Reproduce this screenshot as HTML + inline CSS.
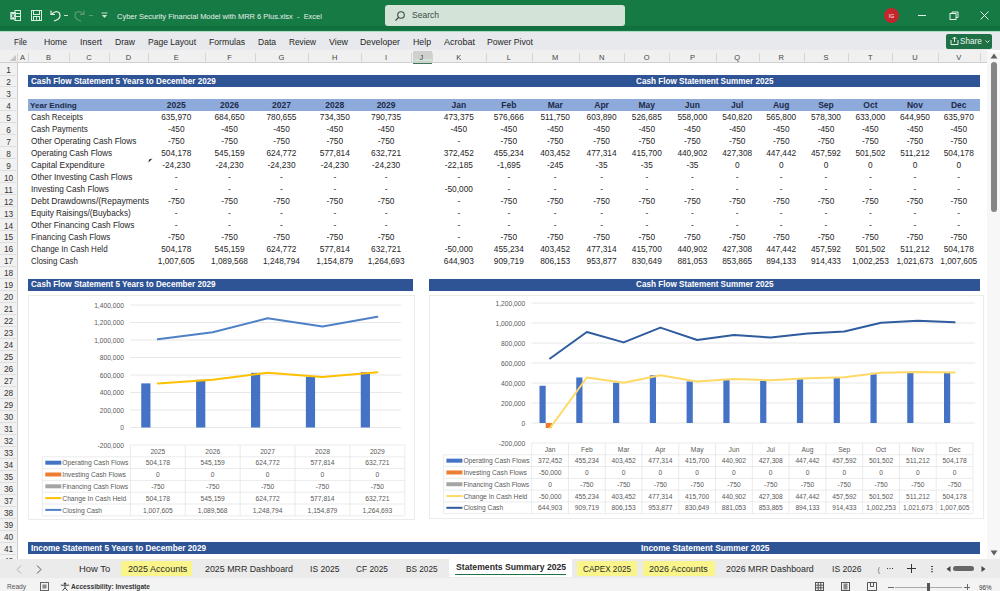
<!DOCTYPE html><html><head><meta charset="utf-8"><style>
*{margin:0;padding:0;box-sizing:border-box}
html,body{width:1000px;height:591px;overflow:hidden;background:#fff;font-family:"Liberation Sans",sans-serif;color:#222}
.a{position:absolute}
.t{position:absolute;white-space:pre;line-height:12px}
.d{position:absolute;white-space:pre;line-height:12px;margin-top:0.4px;font-size:8.3px;color:#262626;text-align:center}
.ch{position:absolute;white-space:pre;font-size:6.7px;color:#595959;line-height:12px;margin-top:0.5px}
</style></head><body>
<div class="a" style="left:0;top:0;width:1000px;height:31px;background:#167a45"></div>
<div class="a" style="left:0;top:26px;width:1000px;height:4px;background:#11703d"></div>
<div class="t" style="left:117px;top:10.8px;font-size:7.8px;color:#e8f1ea;transform:scaleX(0.9593);transform-origin:0 0;">Cyber Security Financial Model with MRR 6 Plus.xlsx  -  Excel</div>
<div class="a" style="left:385px;top:5px;width:240px;height:21px;background:#d3e3d8;border-radius:3px"></div>
<svg class="a" style="left:394px;top:10px" width="12" height="12" viewBox="0 0 12 12"><circle cx="7" cy="5" r="3.3" fill="none" stroke="#3a4a40" stroke-width="1.1"/><line x1="4.6" y1="7.4" x2="1.5" y2="10.5" stroke="#3a4a40" stroke-width="1.2"/></svg>
<div class="t" style="left:412px;top:9px;font-size:8.5px;color:#404a44;transform:scaleX(1.0025);transform-origin:0 0;">Search</div>
<div class="a" style="left:884px;top:8px;width:15px;height:15px;border-radius:50%;background:#c4262e"></div>
<div class="t" style="left:884px;top:9.5px;width:15px;text-align:center;font-size:5px;color:#fff">IG</div>
<div class="a" style="left:918px;top:15px;width:8px;height:1px;background:#e8f1ea"></div>
<svg class="a" style="left:949px;top:11px" width="10" height="9" viewBox="0 0 10 9"><rect x="1" y="2.5" width="6" height="6" fill="none" stroke="#e8f1ea" stroke-width="1"/><path d="M3 2.5 V1 H9 V6.5 H7" fill="none" stroke="#e8f1ea" stroke-width="1"/></svg>
<svg class="a" style="left:980px;top:11px" width="9" height="9" viewBox="0 0 9 9"><path d="M0.5 0.5 L8.5 8.5 M8.5 0.5 L0.5 8.5" stroke="#e8f1ea" stroke-width="1"/></svg>
<svg class="a" style="left:10px;top:10px" width="11" height="11" viewBox="0 0 11 11"><rect x="5" y="0.5" width="5.5" height="10" fill="none" stroke="#d8efdf" stroke-width="1"/><path d="M5 3.5 H10.5 M5 6.5 H10.5" stroke="#d8efdf" stroke-width="1"/><rect x="0.3" y="2" width="5.5" height="7.5" fill="#d8efdf"/><path d="M1.8 3.8 L4.3 7.7 M4.3 3.8 L1.8 7.7" stroke="#1b6f40" stroke-width="0.9"/></svg>
<svg class="a" style="left:31px;top:10px" width="11" height="11" viewBox="0 0 11 11"><rect x="0.5" y="0.5" width="10" height="10" fill="none" stroke="#d8efdf" stroke-width="1"/><rect x="2.5" y="0.5" width="6" height="4" fill="none" stroke="#d8efdf" stroke-width="1"/><rect x="2.5" y="6.5" width="6" height="4" fill="none" stroke="#d8efdf" stroke-width="1"/><path d="M5.5 6.5 V10.5" stroke="#d8efdf" stroke-width="0.8"/></svg>
<svg class="a" style="left:50px;top:9px" width="12" height="13" viewBox="0 0 12 13"><path d="M2 5 C5 1.5 10 2 10 6.5 C10 9.5 7.5 11 4 12" fill="none" stroke="#e8f1ea" stroke-width="1.2"/><path d="M1 1.5 V5.5 H5" fill="none" stroke="#e8f1ea" stroke-width="1.2"/></svg>
<div class="a" style="left:64px;top:15px;width:4px;height:1px;background:#cfe0d4"></div>
<svg class="a" style="left:73px;top:9px" width="12" height="13" viewBox="0 0 12 13"><path d="M10 5 C7 1.5 2 2 2 6.5 C2 9.5 4.5 11 8 12" fill="none" stroke="#5f9a76" stroke-width="1.2"/><path d="M11 1.5 V5.5 H7" fill="none" stroke="#5f9a76" stroke-width="1.2"/></svg>
<div class="a" style="left:89px;top:15px;width:4px;height:1px;background:#5f9a76"></div>
<svg class="a" style="left:101px;top:12px" width="7" height="7" viewBox="0 0 7 7"><line x1="0.5" y1="1" x2="6.5" y2="1" stroke="#cfe0d4"/><path d="M0.8 3 H6.2 L3.5 6 Z" fill="#cfe0d4"/></svg>
<div class="a" style="left:0;top:31px;width:1000px;height:19px;background:#e8e9ec"></div>
<div class="a" style="left:0;top:30.5px;width:1000px;height:1px;background:#a9dcbf"></div>
<div class="t" style="left:14px;top:35.5px;font-size:8.5px;color:#262626;transform:scaleX(0.9492);transform-origin:0 0;">File</div>
<div class="t" style="left:44px;top:35.5px;font-size:8.5px;color:#262626;transform:scaleX(1.0144);transform-origin:0 0;">Home</div>
<div class="t" style="left:80px;top:35.5px;font-size:8.5px;color:#262626;transform:scaleX(1.0349);transform-origin:0 0;">Insert</div>
<div class="t" style="left:115px;top:35.5px;font-size:8.5px;color:#262626;transform:scaleX(1.0083);transform-origin:0 0;">Draw</div>
<div class="t" style="left:148px;top:35.5px;font-size:8.5px;color:#262626;transform:scaleX(1.0056);transform-origin:0 0;">Page Layout</div>
<div class="t" style="left:209px;top:35.5px;font-size:8.5px;color:#262626;transform:scaleX(1.0163);transform-origin:0 0;">Formulas</div>
<div class="t" style="left:258px;top:35.5px;font-size:8.5px;color:#262626;transform:scaleX(1.0025);transform-origin:0 0;">Data</div>
<div class="t" style="left:289px;top:35.5px;font-size:8.5px;color:#262626;transform:scaleX(0.9688);transform-origin:0 0;">Review</div>
<div class="t" style="left:329px;top:35.5px;font-size:8.5px;color:#262626;transform:scaleX(1.0399);transform-origin:0 0;">View</div>
<div class="t" style="left:360px;top:35.5px;font-size:8.5px;color:#262626;transform:scaleX(1.0324);transform-origin:0 0;">Developer</div>
<div class="t" style="left:413px;top:35.5px;font-size:8.5px;color:#262626;transform:scaleX(1.0297);transform-origin:0 0;">Help</div>
<div class="t" style="left:444px;top:35.5px;font-size:8.5px;color:#262626;transform:scaleX(1.0582);transform-origin:0 0;">Acrobat</div>
<div class="t" style="left:487px;top:35.5px;font-size:8.5px;color:#262626;transform:scaleX(1.0143);transform-origin:0 0;">Power Pivot</div>
<div class="a" style="left:946px;top:33.5px;width:46px;height:15px;background:#1e7145;border-radius:2px"></div>
<svg class="a" style="left:950px;top:36px" width="9" height="9" viewBox="0 0 9 9"><path d="M1 4 V8.5 H8 V4" fill="none" stroke="#e8f1ea"/><path d="M4.5 6 V1 M2.5 3 L4.5 1 L6.5 3" fill="none" stroke="#e8f1ea"/></svg>
<div class="t" style="left:960px;top:35px;font-size:8.5px;color:#f2f7f3;transform:scaleX(0.9611);transform-origin:0 0;">Share</div>
<svg class="a" style="left:985px;top:40px" width="5" height="3" viewBox="0 0 5 3"><path d="M0.5 0.5 L2.5 2.5 L4.5 0.5" fill="none" stroke="#e8f1ea"/></svg>
<div class="a" style="left:0;top:50px;width:987px;height:13px;background:#f0f0f0;border-bottom:1px solid #cfcfcf"></div>
<svg class="a" style="left:8.5px;top:54.5px" width="7" height="6.5" viewBox="0 0 7 6.5"><path d="M7 0 V6.5 H0 Z" fill="#c4c4c4"/></svg>
<div class="a" style="left:28px;top:53px;width:1px;height:10px;background:#d6d6d6"></div>
<div class="t" style="left:17px;top:51.5px;width:11px;text-align:center;font-size:7.5px;color:#444;line-height:12px">A</div>
<div class="a" style="left:69px;top:53px;width:1px;height:10px;background:#d6d6d6"></div>
<div class="t" style="left:28px;top:51.5px;width:41px;text-align:center;font-size:7.5px;color:#444;line-height:12px">B</div>
<div class="a" style="left:109px;top:53px;width:1px;height:10px;background:#d6d6d6"></div>
<div class="t" style="left:69px;top:51.5px;width:40px;text-align:center;font-size:7.5px;color:#444;line-height:12px">C</div>
<div class="a" style="left:148px;top:53px;width:1px;height:10px;background:#d6d6d6"></div>
<div class="t" style="left:109px;top:51.5px;width:39px;text-align:center;font-size:7.5px;color:#444;line-height:12px">D</div>
<div class="a" style="left:204.5px;top:53px;width:1px;height:10px;background:#d6d6d6"></div>
<div class="t" style="left:148px;top:51.5px;width:56.5px;text-align:center;font-size:7.5px;color:#444;line-height:12px">E</div>
<div class="a" style="left:254.5px;top:53px;width:1px;height:10px;background:#d6d6d6"></div>
<div class="t" style="left:204.5px;top:51.5px;width:50px;text-align:center;font-size:7.5px;color:#444;line-height:12px">F</div>
<div class="a" style="left:308.4px;top:53px;width:1px;height:10px;background:#d6d6d6"></div>
<div class="t" style="left:254.5px;top:51.5px;width:53.9px;text-align:center;font-size:7.5px;color:#444;line-height:12px">G</div>
<div class="a" style="left:361.2px;top:53px;width:1px;height:10px;background:#d6d6d6"></div>
<div class="t" style="left:308.4px;top:51.5px;width:52.8px;text-align:center;font-size:7.5px;color:#444;line-height:12px">H</div>
<div class="a" style="left:411px;top:53px;width:1px;height:10px;background:#d6d6d6"></div>
<div class="t" style="left:361.2px;top:51.5px;width:49.8px;text-align:center;font-size:7.5px;color:#444;line-height:12px">I</div>
<div class="a" style="left:412.5px;top:51px;width:19.1px;height:12.5px;background:#d0d0d0;border-bottom:1.5px solid #3f7a55"></div>
<div class="a" style="left:415px;top:58.5px;width:16.6px;height:2.5px;background:#cfe6d5"></div>
<div class="a" style="left:431.6px;top:53px;width:1px;height:10px;background:#d6d6d6"></div>
<div class="t" style="left:411px;top:51.5px;width:20.6px;text-align:center;font-size:7.5px;color:#444;line-height:12px">J</div>
<div class="a" style="left:486px;top:53px;width:1px;height:10px;background:#d6d6d6"></div>
<div class="t" style="left:431.6px;top:51.5px;width:54.4px;text-align:center;font-size:7.5px;color:#444;line-height:12px">K</div>
<div class="a" style="left:531.6px;top:53px;width:1px;height:10px;background:#d6d6d6"></div>
<div class="t" style="left:486px;top:51.5px;width:45.6px;text-align:center;font-size:7.5px;color:#444;line-height:12px">L</div>
<div class="a" style="left:578.8px;top:53px;width:1px;height:10px;background:#d6d6d6"></div>
<div class="t" style="left:531.6px;top:51.5px;width:47.2px;text-align:center;font-size:7.5px;color:#444;line-height:12px">M</div>
<div class="a" style="left:624.4px;top:53px;width:1px;height:10px;background:#d6d6d6"></div>
<div class="t" style="left:578.8px;top:51.5px;width:45.6px;text-align:center;font-size:7.5px;color:#444;line-height:12px">N</div>
<div class="a" style="left:669.2px;top:53px;width:1px;height:10px;background:#d6d6d6"></div>
<div class="t" style="left:624.4px;top:51.5px;width:44.8px;text-align:center;font-size:7.5px;color:#444;line-height:12px">O</div>
<div class="a" style="left:715.6px;top:53px;width:1px;height:10px;background:#d6d6d6"></div>
<div class="t" style="left:669.2px;top:51.5px;width:46.4px;text-align:center;font-size:7.5px;color:#444;line-height:12px">P</div>
<div class="a" style="left:758.8px;top:53px;width:1px;height:10px;background:#d6d6d6"></div>
<div class="t" style="left:715.6px;top:51.5px;width:43.2px;text-align:center;font-size:7.5px;color:#444;line-height:12px">Q</div>
<div class="a" style="left:803.6px;top:53px;width:1px;height:10px;background:#d6d6d6"></div>
<div class="t" style="left:758.8px;top:51.5px;width:44.8px;text-align:center;font-size:7.5px;color:#444;line-height:12px">R</div>
<div class="a" style="left:848.4px;top:53px;width:1px;height:10px;background:#d6d6d6"></div>
<div class="t" style="left:803.6px;top:51.5px;width:44.8px;text-align:center;font-size:7.5px;color:#444;line-height:12px">S</div>
<div class="a" style="left:892.4px;top:53px;width:1px;height:10px;background:#d6d6d6"></div>
<div class="t" style="left:848.4px;top:51.5px;width:44px;text-align:center;font-size:7.5px;color:#444;line-height:12px">T</div>
<div class="a" style="left:937.5px;top:53px;width:1px;height:10px;background:#d6d6d6"></div>
<div class="t" style="left:892.4px;top:51.5px;width:45.1px;text-align:center;font-size:7.5px;color:#444;line-height:12px">U</div>
<div class="a" style="left:980px;top:53px;width:1px;height:10px;background:#d6d6d6"></div>
<div class="t" style="left:937.5px;top:51.5px;width:42.5px;text-align:center;font-size:7.5px;color:#444;line-height:12px">V</div>
<div class="a" style="left:987px;top:53px;width:1px;height:10px;background:#d6d6d6"></div>
<div class="a" style="left:17px;top:53px;width:1px;height:10px;background:#d6d6d6"></div>
<div class="a" style="left:0;top:63px;width:17.6px;height:496px;background:#f1f1f1;border-right:1px solid #cdcdcd"></div>
<div class="t" style="left:0;top:63.82px;width:17px;text-align:center;font-size:8.3px;color:#333">1</div>
<div class="a" style="left:0;top:74.5px;width:16px;height:1px;background:#dedede"></div>
<div class="t" style="left:0;top:75.8px;width:17px;text-align:center;font-size:8.3px;color:#333">2</div>
<div class="a" style="left:0;top:86.47px;width:16px;height:1px;background:#dedede"></div>
<div class="t" style="left:0;top:87.77px;width:17px;text-align:center;font-size:8.3px;color:#333">3</div>
<div class="a" style="left:0;top:98.45px;width:16px;height:1px;background:#dedede"></div>
<div class="t" style="left:0;top:99.75px;width:17px;text-align:center;font-size:8.3px;color:#333">4</div>
<div class="a" style="left:0;top:110.42px;width:16px;height:1px;background:#dedede"></div>
<div class="t" style="left:0;top:111.72px;width:17px;text-align:center;font-size:8.3px;color:#333">5</div>
<div class="a" style="left:0;top:122.4px;width:16px;height:1px;background:#dedede"></div>
<div class="t" style="left:0;top:123.7px;width:17px;text-align:center;font-size:8.3px;color:#333">6</div>
<div class="a" style="left:0;top:134.38px;width:16px;height:1px;background:#dedede"></div>
<div class="t" style="left:0;top:135.68px;width:17px;text-align:center;font-size:8.3px;color:#333">7</div>
<div class="a" style="left:0;top:146.35px;width:16px;height:1px;background:#dedede"></div>
<div class="t" style="left:0;top:147.65px;width:17px;text-align:center;font-size:8.3px;color:#333">8</div>
<div class="a" style="left:0;top:158.32px;width:16px;height:1px;background:#dedede"></div>
<div class="t" style="left:0;top:159.62px;width:17px;text-align:center;font-size:8.3px;color:#333">9</div>
<div class="a" style="left:0;top:170.3px;width:16px;height:1px;background:#dedede"></div>
<div class="t" style="left:0;top:171.6px;width:17px;text-align:center;font-size:8.3px;color:#333">10</div>
<div class="a" style="left:0;top:182.28px;width:16px;height:1px;background:#dedede"></div>
<div class="t" style="left:0;top:183.57px;width:17px;text-align:center;font-size:8.3px;color:#333">11</div>
<div class="a" style="left:0;top:194.25px;width:16px;height:1px;background:#dedede"></div>
<div class="t" style="left:0;top:195.55px;width:17px;text-align:center;font-size:8.3px;color:#333">12</div>
<div class="a" style="left:0;top:206.22px;width:16px;height:1px;background:#dedede"></div>
<div class="t" style="left:0;top:207.52px;width:17px;text-align:center;font-size:8.3px;color:#333">13</div>
<div class="a" style="left:0;top:218.2px;width:16px;height:1px;background:#dedede"></div>
<div class="t" style="left:0;top:219.5px;width:17px;text-align:center;font-size:8.3px;color:#333">14</div>
<div class="a" style="left:0;top:230.17px;width:16px;height:1px;background:#dedede"></div>
<div class="t" style="left:0;top:231.48px;width:17px;text-align:center;font-size:8.3px;color:#333">15</div>
<div class="a" style="left:0;top:242.15px;width:16px;height:1px;background:#dedede"></div>
<div class="t" style="left:0;top:243.45px;width:17px;text-align:center;font-size:8.3px;color:#333">16</div>
<div class="a" style="left:0;top:254.12px;width:16px;height:1px;background:#dedede"></div>
<div class="t" style="left:0;top:255.43px;width:17px;text-align:center;font-size:8.3px;color:#333">17</div>
<div class="a" style="left:0;top:266.1px;width:16px;height:1px;background:#dedede"></div>
<div class="t" style="left:0;top:267.4px;width:17px;text-align:center;font-size:8.3px;color:#333">18</div>
<div class="a" style="left:0;top:278.07px;width:16px;height:1px;background:#dedede"></div>
<div class="t" style="left:0;top:279.38px;width:17px;text-align:center;font-size:8.3px;color:#333">19</div>
<div class="a" style="left:0;top:290.05px;width:16px;height:1px;background:#dedede"></div>
<div class="t" style="left:0;top:291.35px;width:17px;text-align:center;font-size:8.3px;color:#333">20</div>
<div class="a" style="left:0;top:302.03px;width:16px;height:1px;background:#dedede"></div>
<div class="t" style="left:0;top:303.32px;width:17px;text-align:center;font-size:8.3px;color:#333">21</div>
<div class="a" style="left:0;top:314px;width:16px;height:1px;background:#dedede"></div>
<div class="t" style="left:0;top:315.3px;width:17px;text-align:center;font-size:8.3px;color:#333">22</div>
<div class="a" style="left:0;top:325.98px;width:16px;height:1px;background:#dedede"></div>
<div class="t" style="left:0;top:327.28px;width:17px;text-align:center;font-size:8.3px;color:#333">23</div>
<div class="a" style="left:0;top:337.95px;width:16px;height:1px;background:#dedede"></div>
<div class="t" style="left:0;top:339.25px;width:17px;text-align:center;font-size:8.3px;color:#333">24</div>
<div class="a" style="left:0;top:349.93px;width:16px;height:1px;background:#dedede"></div>
<div class="t" style="left:0;top:351.23px;width:17px;text-align:center;font-size:8.3px;color:#333">25</div>
<div class="a" style="left:0;top:361.9px;width:16px;height:1px;background:#dedede"></div>
<div class="t" style="left:0;top:363.2px;width:17px;text-align:center;font-size:8.3px;color:#333">26</div>
<div class="a" style="left:0;top:373.88px;width:16px;height:1px;background:#dedede"></div>
<div class="t" style="left:0;top:375.18px;width:17px;text-align:center;font-size:8.3px;color:#333">27</div>
<div class="a" style="left:0;top:385.85px;width:16px;height:1px;background:#dedede"></div>
<div class="t" style="left:0;top:387.15px;width:17px;text-align:center;font-size:8.3px;color:#333">28</div>
<div class="a" style="left:0;top:397.83px;width:16px;height:1px;background:#dedede"></div>
<div class="t" style="left:0;top:399.12px;width:17px;text-align:center;font-size:8.3px;color:#333">29</div>
<div class="a" style="left:0;top:409.8px;width:16px;height:1px;background:#dedede"></div>
<div class="t" style="left:0;top:411.1px;width:17px;text-align:center;font-size:8.3px;color:#333">30</div>
<div class="a" style="left:0;top:421.78px;width:16px;height:1px;background:#dedede"></div>
<div class="t" style="left:0;top:423.07px;width:17px;text-align:center;font-size:8.3px;color:#333">31</div>
<div class="a" style="left:0;top:433.75px;width:16px;height:1px;background:#dedede"></div>
<div class="t" style="left:0;top:435.05px;width:17px;text-align:center;font-size:8.3px;color:#333">32</div>
<div class="a" style="left:0;top:445.73px;width:16px;height:1px;background:#dedede"></div>
<div class="t" style="left:0;top:447.03px;width:17px;text-align:center;font-size:8.3px;color:#333">33</div>
<div class="a" style="left:0;top:457.7px;width:16px;height:1px;background:#dedede"></div>
<div class="t" style="left:0;top:459px;width:17px;text-align:center;font-size:8.3px;color:#333">34</div>
<div class="a" style="left:0;top:469.68px;width:16px;height:1px;background:#dedede"></div>
<div class="t" style="left:0;top:470.98px;width:17px;text-align:center;font-size:8.3px;color:#333">35</div>
<div class="a" style="left:0;top:481.65px;width:16px;height:1px;background:#dedede"></div>
<div class="t" style="left:0;top:482.95px;width:17px;text-align:center;font-size:8.3px;color:#333">36</div>
<div class="a" style="left:0;top:493.62px;width:16px;height:1px;background:#dedede"></div>
<div class="t" style="left:0;top:494.93px;width:17px;text-align:center;font-size:8.3px;color:#333">37</div>
<div class="a" style="left:0;top:505.6px;width:16px;height:1px;background:#dedede"></div>
<div class="t" style="left:0;top:506.9px;width:17px;text-align:center;font-size:8.3px;color:#333">38</div>
<div class="a" style="left:0;top:517.58px;width:16px;height:1px;background:#dedede"></div>
<div class="t" style="left:0;top:518.87px;width:17px;text-align:center;font-size:8.3px;color:#333">39</div>
<div class="a" style="left:0;top:529.55px;width:16px;height:1px;background:#dedede"></div>
<div class="t" style="left:0;top:530.85px;width:17px;text-align:center;font-size:8.3px;color:#333">40</div>
<div class="a" style="left:0;top:541.52px;width:16px;height:1px;background:#dedede"></div>
<div class="t" style="left:0;top:542.82px;width:17px;text-align:center;font-size:8.3px;color:#333">41</div>
<div class="a" style="left:0;top:553.5px;width:16px;height:1px;background:#dedede"></div>
<div class="t" style="left:0;top:554.8px;width:17px;text-align:center;font-size:8.3px;color:#333">42</div>
<div class="a" style="left:0;top:565.48px;width:16px;height:1px;background:#dedede"></div>
<div class="a" style="left:987px;top:52px;width:13px;height:507px;background:#f7f7f7"></div>
<svg class="a" style="left:990px;top:53px" width="8" height="6" viewBox="0 0 8 6"><path d="M4 0.5 L7.5 5.5 H0.5 Z" fill="#606060"/></svg>
<div class="a" style="left:991px;top:62px;width:6px;height:150px;background:#858585;border-radius:3px"></div>
<svg class="a" style="left:990px;top:550px" width="8" height="6" viewBox="0 0 8 6"><path d="M4 5.5 L7.5 0.5 H0.5 Z" fill="#606060"/></svg>
<div class="a" style="left:28px;top:75px;width:952px;height:11.97px;background:#2f5496"></div>
<div class="t" style="left:30.5px;top:75.6px;font-size:8.2px;font-weight:bold;color:#fff;transform:scaleX(0.9933);transform-origin:0 0;">Cash Flow Statement 5 Years to December 2029</div>
<div class="t" style="left:636.2px;top:75.6px;font-size:8.2px;font-weight:bold;color:#fff;transform:scaleX(0.9947);transform-origin:0 0;">Cash Flow Statement Summer 2025</div>
<div class="a" style="left:28px;top:98.95px;width:952px;height:11.97px;background:#8eaadb"></div>
<div class="t" style="left:30px;top:100.15px;font-size:8.1px;font-weight:bold;color:#1c2b4a">Year Ending</div>
<div class="d" style="left:148px;top:98.95px;width:56.5px;font-weight:bold;color:#1c2b4a;font-size:8.5px;margin-top:0.4px">2025</div>
<div class="d" style="left:204.5px;top:98.95px;width:50px;font-weight:bold;color:#1c2b4a;font-size:8.5px;margin-top:0.4px">2026</div>
<div class="d" style="left:254.5px;top:98.95px;width:53.9px;font-weight:bold;color:#1c2b4a;font-size:8.5px;margin-top:0.4px">2027</div>
<div class="d" style="left:308.4px;top:98.95px;width:52.8px;font-weight:bold;color:#1c2b4a;font-size:8.5px;margin-top:0.4px">2028</div>
<div class="d" style="left:361.2px;top:98.95px;width:49.8px;font-weight:bold;color:#1c2b4a;font-size:8.5px;margin-top:0.4px">2029</div>
<div class="d" style="left:431.6px;top:98.95px;width:54.4px;font-weight:bold;color:#1c2b4a;font-size:8.5px;margin-top:0.4px">Jan</div>
<div class="d" style="left:486px;top:98.95px;width:45.6px;font-weight:bold;color:#1c2b4a;font-size:8.5px;margin-top:0.4px">Feb</div>
<div class="d" style="left:531.6px;top:98.95px;width:47.2px;font-weight:bold;color:#1c2b4a;font-size:8.5px;margin-top:0.4px">Mar</div>
<div class="d" style="left:578.8px;top:98.95px;width:45.6px;font-weight:bold;color:#1c2b4a;font-size:8.5px;margin-top:0.4px">Apr</div>
<div class="d" style="left:624.4px;top:98.95px;width:44.8px;font-weight:bold;color:#1c2b4a;font-size:8.5px;margin-top:0.4px">May</div>
<div class="d" style="left:669.2px;top:98.95px;width:46.4px;font-weight:bold;color:#1c2b4a;font-size:8.5px;margin-top:0.4px">Jun</div>
<div class="d" style="left:715.6px;top:98.95px;width:43.2px;font-weight:bold;color:#1c2b4a;font-size:8.5px;margin-top:0.4px">Jul</div>
<div class="d" style="left:758.8px;top:98.95px;width:44.8px;font-weight:bold;color:#1c2b4a;font-size:8.5px;margin-top:0.4px">Aug</div>
<div class="d" style="left:803.6px;top:98.95px;width:44.8px;font-weight:bold;color:#1c2b4a;font-size:8.5px;margin-top:0.4px">Sep</div>
<div class="d" style="left:848.4px;top:98.95px;width:44px;font-weight:bold;color:#1c2b4a;font-size:8.5px;margin-top:0.4px">Oct</div>
<div class="d" style="left:892.4px;top:98.95px;width:45.1px;font-weight:bold;color:#1c2b4a;font-size:8.5px;margin-top:0.4px">Nov</div>
<div class="d" style="left:937.5px;top:98.95px;width:42.5px;font-weight:bold;color:#1c2b4a;font-size:8.5px;margin-top:0.4px">Dec</div>
<div class="t" style="left:30.5px;top:112.12px;font-size:8.2px;color:#262626;transform:scaleX(0.9752);transform-origin:0 0;">Cash Receipts</div>
<div class="d" style="left:148px;top:110.92px;width:56.5px">635,970</div>
<div class="d" style="left:204.5px;top:110.92px;width:50px">684,650</div>
<div class="d" style="left:254.5px;top:110.92px;width:53.9px">780,655</div>
<div class="d" style="left:308.4px;top:110.92px;width:52.8px">734,350</div>
<div class="d" style="left:361.2px;top:110.92px;width:49.8px">790,735</div>
<div class="d" style="left:431.6px;top:110.92px;width:54.4px">473,375</div>
<div class="d" style="left:486px;top:110.92px;width:45.6px">576,666</div>
<div class="d" style="left:531.6px;top:110.92px;width:47.2px">511,750</div>
<div class="d" style="left:578.8px;top:110.92px;width:45.6px">603,890</div>
<div class="d" style="left:624.4px;top:110.92px;width:44.8px">526,685</div>
<div class="d" style="left:669.2px;top:110.92px;width:46.4px">558,000</div>
<div class="d" style="left:715.6px;top:110.92px;width:43.2px">540,820</div>
<div class="d" style="left:758.8px;top:110.92px;width:44.8px">565,800</div>
<div class="d" style="left:803.6px;top:110.92px;width:44.8px">578,300</div>
<div class="d" style="left:848.4px;top:110.92px;width:44px">633,000</div>
<div class="d" style="left:892.4px;top:110.92px;width:45.1px">644,950</div>
<div class="d" style="left:937.5px;top:110.92px;width:42.5px">635,970</div>
<div class="t" style="left:30.5px;top:124.1px;font-size:8.2px;color:#262626;transform:scaleX(0.9813);transform-origin:0 0;">Cash Payments</div>
<div class="d" style="left:148px;top:122.9px;width:56.5px">-450</div>
<div class="d" style="left:204.5px;top:122.9px;width:50px">-450</div>
<div class="d" style="left:254.5px;top:122.9px;width:53.9px">-450</div>
<div class="d" style="left:308.4px;top:122.9px;width:52.8px">-450</div>
<div class="d" style="left:361.2px;top:122.9px;width:49.8px">-450</div>
<div class="d" style="left:431.6px;top:122.9px;width:54.4px">-450</div>
<div class="d" style="left:486px;top:122.9px;width:45.6px">-450</div>
<div class="d" style="left:531.6px;top:122.9px;width:47.2px">-450</div>
<div class="d" style="left:578.8px;top:122.9px;width:45.6px">-450</div>
<div class="d" style="left:624.4px;top:122.9px;width:44.8px">-450</div>
<div class="d" style="left:669.2px;top:122.9px;width:46.4px">-450</div>
<div class="d" style="left:715.6px;top:122.9px;width:43.2px">-450</div>
<div class="d" style="left:758.8px;top:122.9px;width:44.8px">-450</div>
<div class="d" style="left:803.6px;top:122.9px;width:44.8px">-450</div>
<div class="d" style="left:848.4px;top:122.9px;width:44px">-450</div>
<div class="d" style="left:892.4px;top:122.9px;width:45.1px">-450</div>
<div class="d" style="left:937.5px;top:122.9px;width:42.5px">-450</div>
<div class="t" style="left:30.5px;top:136.07px;font-size:8.2px;color:#262626;transform:scaleX(1.0153);transform-origin:0 0;">Other Operating Cash Flows</div>
<div class="d" style="left:148px;top:134.88px;width:56.5px">-750</div>
<div class="d" style="left:204.5px;top:134.88px;width:50px">-750</div>
<div class="d" style="left:254.5px;top:134.88px;width:53.9px">-750</div>
<div class="d" style="left:308.4px;top:134.88px;width:52.8px">-750</div>
<div class="d" style="left:361.2px;top:134.88px;width:49.8px">-750</div>
<div class="d" style="left:431.6px;top:134.88px;width:54.4px">-</div>
<div class="d" style="left:486px;top:134.88px;width:45.6px">-750</div>
<div class="d" style="left:531.6px;top:134.88px;width:47.2px">-750</div>
<div class="d" style="left:578.8px;top:134.88px;width:45.6px">-750</div>
<div class="d" style="left:624.4px;top:134.88px;width:44.8px">-750</div>
<div class="d" style="left:669.2px;top:134.88px;width:46.4px">-750</div>
<div class="d" style="left:715.6px;top:134.88px;width:43.2px">-750</div>
<div class="d" style="left:758.8px;top:134.88px;width:44.8px">-750</div>
<div class="d" style="left:803.6px;top:134.88px;width:44.8px">-750</div>
<div class="d" style="left:848.4px;top:134.88px;width:44px">-750</div>
<div class="d" style="left:892.4px;top:134.88px;width:45.1px">-750</div>
<div class="d" style="left:937.5px;top:134.88px;width:42.5px">-750</div>
<div class="t" style="left:30.5px;top:148.05px;font-size:8.2px;color:#262626;transform:scaleX(1.0009);transform-origin:0 0;">Operating Cash Flows</div>
<div class="d" style="left:148px;top:146.85px;width:56.5px">504,178</div>
<div class="d" style="left:204.5px;top:146.85px;width:50px">545,159</div>
<div class="d" style="left:254.5px;top:146.85px;width:53.9px">624,772</div>
<div class="d" style="left:308.4px;top:146.85px;width:52.8px">577,814</div>
<div class="d" style="left:361.2px;top:146.85px;width:49.8px">632,721</div>
<div class="d" style="left:431.6px;top:146.85px;width:54.4px">372,452</div>
<div class="d" style="left:486px;top:146.85px;width:45.6px">455,234</div>
<div class="d" style="left:531.6px;top:146.85px;width:47.2px">403,452</div>
<div class="d" style="left:578.8px;top:146.85px;width:45.6px">477,314</div>
<div class="d" style="left:624.4px;top:146.85px;width:44.8px">415,700</div>
<div class="d" style="left:669.2px;top:146.85px;width:46.4px">440,902</div>
<div class="d" style="left:715.6px;top:146.85px;width:43.2px">427,308</div>
<div class="d" style="left:758.8px;top:146.85px;width:44.8px">447,442</div>
<div class="d" style="left:803.6px;top:146.85px;width:44.8px">457,592</div>
<div class="d" style="left:848.4px;top:146.85px;width:44px">501,502</div>
<div class="d" style="left:892.4px;top:146.85px;width:45.1px">511,212</div>
<div class="d" style="left:937.5px;top:146.85px;width:42.5px">504,178</div>
<div class="t" style="left:30.5px;top:160.02px;font-size:8.2px;color:#262626;transform:scaleX(1.0298);transform-origin:0 0;">Capital Expenditure</div>
<div class="d" style="left:148px;top:158.82px;width:56.5px">-24,230</div>
<div class="d" style="left:204.5px;top:158.82px;width:50px">-24,230</div>
<div class="d" style="left:254.5px;top:158.82px;width:53.9px">-24,230</div>
<div class="d" style="left:308.4px;top:158.82px;width:52.8px">-24,230</div>
<div class="d" style="left:361.2px;top:158.82px;width:49.8px">-24,230</div>
<div class="d" style="left:431.6px;top:158.82px;width:54.4px">-22,185</div>
<div class="d" style="left:486px;top:158.82px;width:45.6px">-1,695</div>
<div class="d" style="left:531.6px;top:158.82px;width:47.2px">-245</div>
<div class="d" style="left:578.8px;top:158.82px;width:45.6px">-35</div>
<div class="d" style="left:624.4px;top:158.82px;width:44.8px">-35</div>
<div class="d" style="left:669.2px;top:158.82px;width:46.4px">-35</div>
<div class="d" style="left:715.6px;top:158.82px;width:43.2px">0</div>
<div class="d" style="left:758.8px;top:158.82px;width:44.8px">0</div>
<div class="d" style="left:803.6px;top:158.82px;width:44.8px">0</div>
<div class="d" style="left:848.4px;top:158.82px;width:44px">0</div>
<div class="d" style="left:892.4px;top:158.82px;width:45.1px">0</div>
<div class="d" style="left:937.5px;top:158.82px;width:42.5px">0</div>
<div class="t" style="left:30.5px;top:172px;font-size:8.2px;color:#262626;transform:scaleX(1.0078);transform-origin:0 0;">Other Investing Cash Flows</div>
<div class="d" style="left:148px;top:170.8px;width:56.5px">-</div>
<div class="d" style="left:204.5px;top:170.8px;width:50px">-</div>
<div class="d" style="left:254.5px;top:170.8px;width:53.9px">-</div>
<div class="d" style="left:308.4px;top:170.8px;width:52.8px">-</div>
<div class="d" style="left:361.2px;top:170.8px;width:49.8px">-</div>
<div class="d" style="left:431.6px;top:170.8px;width:54.4px">-</div>
<div class="d" style="left:486px;top:170.8px;width:45.6px">-</div>
<div class="d" style="left:531.6px;top:170.8px;width:47.2px">-</div>
<div class="d" style="left:578.8px;top:170.8px;width:45.6px">-</div>
<div class="d" style="left:624.4px;top:170.8px;width:44.8px">-</div>
<div class="d" style="left:669.2px;top:170.8px;width:46.4px">-</div>
<div class="d" style="left:715.6px;top:170.8px;width:43.2px">-</div>
<div class="d" style="left:758.8px;top:170.8px;width:44.8px">-</div>
<div class="d" style="left:803.6px;top:170.8px;width:44.8px">-</div>
<div class="d" style="left:848.4px;top:170.8px;width:44px">-</div>
<div class="d" style="left:892.4px;top:170.8px;width:45.1px">-</div>
<div class="d" style="left:937.5px;top:170.8px;width:42.5px">-</div>
<div class="t" style="left:30.5px;top:183.97px;font-size:8.2px;color:#262626;transform:scaleX(0.9996);transform-origin:0 0;">Investing Cash Flows</div>
<div class="d" style="left:148px;top:182.77px;width:56.5px">-</div>
<div class="d" style="left:204.5px;top:182.77px;width:50px">-</div>
<div class="d" style="left:254.5px;top:182.77px;width:53.9px">-</div>
<div class="d" style="left:308.4px;top:182.77px;width:52.8px">-</div>
<div class="d" style="left:361.2px;top:182.77px;width:49.8px">-</div>
<div class="d" style="left:431.6px;top:182.77px;width:54.4px">-50,000</div>
<div class="d" style="left:486px;top:182.77px;width:45.6px">-</div>
<div class="d" style="left:531.6px;top:182.77px;width:47.2px">-</div>
<div class="d" style="left:578.8px;top:182.77px;width:45.6px">-</div>
<div class="d" style="left:624.4px;top:182.77px;width:44.8px">-</div>
<div class="d" style="left:669.2px;top:182.77px;width:46.4px">-</div>
<div class="d" style="left:715.6px;top:182.77px;width:43.2px">-</div>
<div class="d" style="left:758.8px;top:182.77px;width:44.8px">-</div>
<div class="d" style="left:803.6px;top:182.77px;width:44.8px">-</div>
<div class="d" style="left:848.4px;top:182.77px;width:44px">-</div>
<div class="d" style="left:892.4px;top:182.77px;width:45.1px">-</div>
<div class="d" style="left:937.5px;top:182.77px;width:42.5px">-</div>
<div class="t" style="left:30.5px;top:195.95px;font-size:8.2px;color:#262626;transform:scaleX(1.0407);transform-origin:0 0;">Debt Drawdowns/(Repayments</div>
<div class="d" style="left:148px;top:194.75px;width:56.5px">-750</div>
<div class="d" style="left:204.5px;top:194.75px;width:50px">-750</div>
<div class="d" style="left:254.5px;top:194.75px;width:53.9px">-750</div>
<div class="d" style="left:308.4px;top:194.75px;width:52.8px">-750</div>
<div class="d" style="left:361.2px;top:194.75px;width:49.8px">-750</div>
<div class="d" style="left:431.6px;top:194.75px;width:54.4px">-</div>
<div class="d" style="left:486px;top:194.75px;width:45.6px">-750</div>
<div class="d" style="left:531.6px;top:194.75px;width:47.2px">-750</div>
<div class="d" style="left:578.8px;top:194.75px;width:45.6px">-750</div>
<div class="d" style="left:624.4px;top:194.75px;width:44.8px">-750</div>
<div class="d" style="left:669.2px;top:194.75px;width:46.4px">-750</div>
<div class="d" style="left:715.6px;top:194.75px;width:43.2px">-750</div>
<div class="d" style="left:758.8px;top:194.75px;width:44.8px">-750</div>
<div class="d" style="left:803.6px;top:194.75px;width:44.8px">-750</div>
<div class="d" style="left:848.4px;top:194.75px;width:44px">-750</div>
<div class="d" style="left:892.4px;top:194.75px;width:45.1px">-750</div>
<div class="d" style="left:937.5px;top:194.75px;width:42.5px">-750</div>
<div class="t" style="left:30.5px;top:207.92px;font-size:8.2px;color:#262626;transform:scaleX(1.0009);transform-origin:0 0;">Equity Raisings/(Buybacks)</div>
<div class="d" style="left:148px;top:206.72px;width:56.5px">-</div>
<div class="d" style="left:204.5px;top:206.72px;width:50px">-</div>
<div class="d" style="left:254.5px;top:206.72px;width:53.9px">-</div>
<div class="d" style="left:308.4px;top:206.72px;width:52.8px">-</div>
<div class="d" style="left:361.2px;top:206.72px;width:49.8px">-</div>
<div class="d" style="left:431.6px;top:206.72px;width:54.4px">-</div>
<div class="d" style="left:486px;top:206.72px;width:45.6px">-</div>
<div class="d" style="left:531.6px;top:206.72px;width:47.2px">-</div>
<div class="d" style="left:578.8px;top:206.72px;width:45.6px">-</div>
<div class="d" style="left:624.4px;top:206.72px;width:44.8px">-</div>
<div class="d" style="left:669.2px;top:206.72px;width:46.4px">-</div>
<div class="d" style="left:715.6px;top:206.72px;width:43.2px">-</div>
<div class="d" style="left:758.8px;top:206.72px;width:44.8px">-</div>
<div class="d" style="left:803.6px;top:206.72px;width:44.8px">-</div>
<div class="d" style="left:848.4px;top:206.72px;width:44px">-</div>
<div class="d" style="left:892.4px;top:206.72px;width:45.1px">-</div>
<div class="d" style="left:937.5px;top:206.72px;width:42.5px">-</div>
<div class="t" style="left:30.5px;top:219.9px;font-size:8.2px;color:#262626;transform:scaleX(1.0005);transform-origin:0 0;">Other Financing Cash Flows</div>
<div class="d" style="left:148px;top:218.7px;width:56.5px">-</div>
<div class="d" style="left:204.5px;top:218.7px;width:50px">-</div>
<div class="d" style="left:254.5px;top:218.7px;width:53.9px">-</div>
<div class="d" style="left:308.4px;top:218.7px;width:52.8px">-</div>
<div class="d" style="left:361.2px;top:218.7px;width:49.8px">-</div>
<div class="d" style="left:431.6px;top:218.7px;width:54.4px">-</div>
<div class="d" style="left:486px;top:218.7px;width:45.6px">-</div>
<div class="d" style="left:531.6px;top:218.7px;width:47.2px">-</div>
<div class="d" style="left:578.8px;top:218.7px;width:45.6px">-</div>
<div class="d" style="left:624.4px;top:218.7px;width:44.8px">-</div>
<div class="d" style="left:669.2px;top:218.7px;width:46.4px">-</div>
<div class="d" style="left:715.6px;top:218.7px;width:43.2px">-</div>
<div class="d" style="left:758.8px;top:218.7px;width:44.8px">-</div>
<div class="d" style="left:803.6px;top:218.7px;width:44.8px">-</div>
<div class="d" style="left:848.4px;top:218.7px;width:44px">-</div>
<div class="d" style="left:892.4px;top:218.7px;width:45.1px">-</div>
<div class="d" style="left:937.5px;top:218.7px;width:42.5px">-</div>
<div class="t" style="left:30.5px;top:231.88px;font-size:8.2px;color:#262626;transform:scaleX(0.9843);transform-origin:0 0;">Financing Cash Flows</div>
<div class="d" style="left:148px;top:230.68px;width:56.5px">-750</div>
<div class="d" style="left:204.5px;top:230.68px;width:50px">-750</div>
<div class="d" style="left:254.5px;top:230.68px;width:53.9px">-750</div>
<div class="d" style="left:308.4px;top:230.68px;width:52.8px">-750</div>
<div class="d" style="left:361.2px;top:230.68px;width:49.8px">-750</div>
<div class="d" style="left:431.6px;top:230.68px;width:54.4px">-</div>
<div class="d" style="left:486px;top:230.68px;width:45.6px">-750</div>
<div class="d" style="left:531.6px;top:230.68px;width:47.2px">-750</div>
<div class="d" style="left:578.8px;top:230.68px;width:45.6px">-750</div>
<div class="d" style="left:624.4px;top:230.68px;width:44.8px">-750</div>
<div class="d" style="left:669.2px;top:230.68px;width:46.4px">-750</div>
<div class="d" style="left:715.6px;top:230.68px;width:43.2px">-750</div>
<div class="d" style="left:758.8px;top:230.68px;width:44.8px">-750</div>
<div class="d" style="left:803.6px;top:230.68px;width:44.8px">-750</div>
<div class="d" style="left:848.4px;top:230.68px;width:44px">-750</div>
<div class="d" style="left:892.4px;top:230.68px;width:45.1px">-750</div>
<div class="d" style="left:937.5px;top:230.68px;width:42.5px">-750</div>
<div class="t" style="left:30.5px;top:243.85px;font-size:8.2px;color:#262626;transform:scaleX(0.9783);transform-origin:0 0;">Change In Cash Held</div>
<div class="d" style="left:148px;top:242.65px;width:56.5px">504,178</div>
<div class="d" style="left:204.5px;top:242.65px;width:50px">545,159</div>
<div class="d" style="left:254.5px;top:242.65px;width:53.9px">624,772</div>
<div class="d" style="left:308.4px;top:242.65px;width:52.8px">577,814</div>
<div class="d" style="left:361.2px;top:242.65px;width:49.8px">632,721</div>
<div class="d" style="left:431.6px;top:242.65px;width:54.4px">-50,000</div>
<div class="d" style="left:486px;top:242.65px;width:45.6px">455,234</div>
<div class="d" style="left:531.6px;top:242.65px;width:47.2px">403,452</div>
<div class="d" style="left:578.8px;top:242.65px;width:45.6px">477,314</div>
<div class="d" style="left:624.4px;top:242.65px;width:44.8px">415,700</div>
<div class="d" style="left:669.2px;top:242.65px;width:46.4px">440,902</div>
<div class="d" style="left:715.6px;top:242.65px;width:43.2px">427,308</div>
<div class="d" style="left:758.8px;top:242.65px;width:44.8px">447,442</div>
<div class="d" style="left:803.6px;top:242.65px;width:44.8px">457,592</div>
<div class="d" style="left:848.4px;top:242.65px;width:44px">501,502</div>
<div class="d" style="left:892.4px;top:242.65px;width:45.1px">511,212</div>
<div class="d" style="left:937.5px;top:242.65px;width:42.5px">504,178</div>
<div class="t" style="left:30.5px;top:255.82px;font-size:8.2px;color:#262626;transform:scaleX(0.9617);transform-origin:0 0;">Closing Cash</div>
<div class="d" style="left:148px;top:254.62px;width:56.5px">1,007,605</div>
<div class="d" style="left:204.5px;top:254.62px;width:50px">1,089,568</div>
<div class="d" style="left:254.5px;top:254.62px;width:53.9px">1,248,794</div>
<div class="d" style="left:308.4px;top:254.62px;width:52.8px">1,154,879</div>
<div class="d" style="left:361.2px;top:254.62px;width:49.8px">1,264,693</div>
<div class="d" style="left:431.6px;top:254.62px;width:54.4px">644,903</div>
<div class="d" style="left:486px;top:254.62px;width:45.6px">909,719</div>
<div class="d" style="left:531.6px;top:254.62px;width:47.2px">806,153</div>
<div class="d" style="left:578.8px;top:254.62px;width:45.6px">953,877</div>
<div class="d" style="left:624.4px;top:254.62px;width:44.8px">830,649</div>
<div class="d" style="left:669.2px;top:254.62px;width:46.4px">881,053</div>
<div class="d" style="left:715.6px;top:254.62px;width:43.2px">853,865</div>
<div class="d" style="left:758.8px;top:254.62px;width:44.8px">894,133</div>
<div class="d" style="left:803.6px;top:254.62px;width:44.8px">914,433</div>
<div class="d" style="left:848.4px;top:254.62px;width:44px">1,002,253</div>
<div class="d" style="left:892.4px;top:254.62px;width:45.1px">1,021,673</div>
<div class="d" style="left:937.5px;top:254.62px;width:42.5px">1,007,605</div>
<svg class="a" style="left:148px;top:158px" width="5" height="5" viewBox="0 0 5 5"><path d="M0.5 4.5 L1 1.5 L4.5 0.5 Z" fill="#222"/></svg>
<div class="a" style="left:28px;top:278.57px;width:385px;height:11.97px;background:#2f5496"></div>
<div class="t" style="left:30.5px;top:279.18px;font-size:8.2px;font-weight:bold;color:#fff;transform:scaleX(0.9927);transform-origin:0 0;">Cash Flow Statement 5 Years to December 2029</div>
<div class="a" style="left:429px;top:278.57px;width:551px;height:11.97px;background:#2f5496"></div>
<div class="t" style="left:636.2px;top:279.18px;font-size:8.2px;font-weight:bold;color:#fff;transform:scaleX(0.9947);transform-origin:0 0;">Cash Flow Statement Summer 2025</div>
<div class="a" style="left:28px;top:542.02px;width:952px;height:11.97px;background:#2f5496"></div>
<div class="t" style="left:30.5px;top:542.62px;font-size:8.2px;font-weight:bold;color:#fff;transform:scaleX(1.0083);transform-origin:0 0;">Income Statement 5 Years to December 2029</div>
<div class="t" style="left:640.7px;top:542.62px;font-size:8.2px;font-weight:bold;color:#fff;transform:scaleX(1.0187);transform-origin:0 0;">Income Statement Summer 2025</div>
<div class="a" style="left:27.6px;top:295px;width:387.8px;height:224.6px;border:1px solid #ebebeb;background:#fff"></div>
<svg class="a" style="left:0;top:0" width="1000" height="591" viewBox="0 0 1000 591"><line x1="130.4" y1="305" x2="401" y2="305" stroke="#e2e2e2" stroke-width="0.8"/><line x1="130.4" y1="322.5" x2="401" y2="322.5" stroke="#e2e2e2" stroke-width="0.8"/><line x1="130.4" y1="340" x2="401" y2="340" stroke="#e2e2e2" stroke-width="0.8"/><line x1="130.4" y1="357.5" x2="401" y2="357.5" stroke="#e2e2e2" stroke-width="0.8"/><line x1="130.4" y1="375" x2="401" y2="375" stroke="#e2e2e2" stroke-width="0.8"/><line x1="130.4" y1="392.5" x2="401" y2="392.5" stroke="#e2e2e2" stroke-width="0.8"/><line x1="130.4" y1="410" x2="401" y2="410" stroke="#e2e2e2" stroke-width="0.8"/><line x1="130.4" y1="427.5" x2="401" y2="427.5" stroke="#e2e2e2" stroke-width="0.8"/><rect x="141.24" y="383.38" width="9.2" height="44.12" fill="#4472c4"/><rect x="196.12" y="379.8" width="9.2" height="47.7" fill="#4472c4"/><rect x="251" y="372.83" width="9.2" height="54.67" fill="#4472c4"/><rect x="305.88" y="376.94" width="9.2" height="50.56" fill="#4472c4"/><rect x="360.76" y="372.14" width="9.2" height="55.36" fill="#4472c4"/><polyline points="157.84,383.38 212.72,379.8 267.6,372.83 322.48,376.94 377.36,372.14" fill="none" stroke="#ffc000" stroke-width="2" stroke-linejoin="round" stroke-linecap="round"/><polyline points="157.84,339.33 212.72,332.16 267.6,318.23 322.48,326.45 377.36,316.84" fill="none" stroke="#4f81c7" stroke-width="2" stroke-linejoin="round" stroke-linecap="round"/><line x1="42.3" y1="456.8" x2="404.8" y2="456.8" stroke="#e6e6e6" stroke-width="0.8"/><line x1="42.3" y1="468.6" x2="404.8" y2="468.6" stroke="#e6e6e6" stroke-width="0.8"/><line x1="42.3" y1="480.4" x2="404.8" y2="480.4" stroke="#e6e6e6" stroke-width="0.8"/><line x1="42.3" y1="492.2" x2="404.8" y2="492.2" stroke="#e6e6e6" stroke-width="0.8"/><line x1="42.3" y1="504" x2="404.8" y2="504" stroke="#e6e6e6" stroke-width="0.8"/><line x1="130.4" y1="445" x2="404.8" y2="445" stroke="#e6e6e6" stroke-width="0.8"/><line x1="42.3" y1="515.8" x2="404.8" y2="515.8" stroke="#e6e6e6" stroke-width="0.8"/><line x1="42.3" y1="456.8" x2="42.3" y2="515.8" stroke="#e6e6e6" stroke-width="0.8"/><line x1="130.4" y1="445" x2="130.4" y2="515.8" stroke="#e6e6e6" stroke-width="0.8"/><line x1="185.28" y1="445" x2="185.28" y2="515.8" stroke="#e6e6e6" stroke-width="0.8"/><line x1="240.16" y1="445" x2="240.16" y2="515.8" stroke="#e6e6e6" stroke-width="0.8"/><line x1="295.04" y1="445" x2="295.04" y2="515.8" stroke="#e6e6e6" stroke-width="0.8"/><line x1="349.92" y1="445" x2="349.92" y2="515.8" stroke="#e6e6e6" stroke-width="0.8"/><line x1="404.8" y1="445" x2="404.8" y2="515.8" stroke="#e6e6e6" stroke-width="0.8"/><rect x="45.3" y="460.7" width="16" height="4" fill="#4472c4"/><rect x="45.3" y="472.5" width="16" height="4" fill="#ed7d31"/><rect x="45.3" y="484.3" width="16" height="4" fill="#a5a5a5"/><rect x="45.3" y="497.1" width="16" height="2" fill="#ffc000"/><rect x="45.3" y="508.9" width="16" height="2" fill="#4f81c7"/></svg>
<div class="ch" style="left:63.9px;top:299.4px;width:60px;text-align:right">1,400,000</div>
<div class="ch" style="left:63.9px;top:316.9px;width:60px;text-align:right">1,200,000</div>
<div class="ch" style="left:63.9px;top:334.4px;width:60px;text-align:right">1,000,000</div>
<div class="ch" style="left:63.9px;top:351.9px;width:60px;text-align:right">800,000</div>
<div class="ch" style="left:63.9px;top:369.4px;width:60px;text-align:right">600,000</div>
<div class="ch" style="left:63.9px;top:386.9px;width:60px;text-align:right">400,000</div>
<div class="ch" style="left:63.9px;top:404.4px;width:60px;text-align:right">200,000</div>
<div class="ch" style="left:63.9px;top:421.9px;width:60px;text-align:right">0</div>
<div class="ch" style="left:63.9px;top:439.4px;width:60px;text-align:right">-200,000</div>
<div class="ch" style="left:130.4px;top:445px;width:54.88px;text-align:center;line-height:11.8px">2025</div>
<div class="ch" style="left:185.28px;top:445px;width:54.88px;text-align:center;line-height:11.8px">2026</div>
<div class="ch" style="left:240.16px;top:445px;width:54.88px;text-align:center;line-height:11.8px">2027</div>
<div class="ch" style="left:295.04px;top:445px;width:54.88px;text-align:center;line-height:11.8px">2028</div>
<div class="ch" style="left:349.92px;top:445px;width:54.88px;text-align:center;line-height:11.8px">2029</div>
<div class="ch" style="left:62.3px;top:456.8px;line-height:11.8px">Operating Cash Flows</div>
<div class="ch" style="left:130.4px;top:456.8px;width:54.88px;text-align:center;line-height:11.8px">504,178</div>
<div class="ch" style="left:185.28px;top:456.8px;width:54.88px;text-align:center;line-height:11.8px">545,159</div>
<div class="ch" style="left:240.16px;top:456.8px;width:54.88px;text-align:center;line-height:11.8px">624,772</div>
<div class="ch" style="left:295.04px;top:456.8px;width:54.88px;text-align:center;line-height:11.8px">577,814</div>
<div class="ch" style="left:349.92px;top:456.8px;width:54.88px;text-align:center;line-height:11.8px">632,721</div>
<div class="ch" style="left:62.3px;top:468.6px;line-height:11.8px">Investing Cash Flows</div>
<div class="ch" style="left:130.4px;top:468.6px;width:54.88px;text-align:center;line-height:11.8px">0</div>
<div class="ch" style="left:185.28px;top:468.6px;width:54.88px;text-align:center;line-height:11.8px">0</div>
<div class="ch" style="left:240.16px;top:468.6px;width:54.88px;text-align:center;line-height:11.8px">0</div>
<div class="ch" style="left:295.04px;top:468.6px;width:54.88px;text-align:center;line-height:11.8px">0</div>
<div class="ch" style="left:349.92px;top:468.6px;width:54.88px;text-align:center;line-height:11.8px">0</div>
<div class="ch" style="left:62.3px;top:480.4px;line-height:11.8px">Financing Cash Flows</div>
<div class="ch" style="left:130.4px;top:480.4px;width:54.88px;text-align:center;line-height:11.8px">-750</div>
<div class="ch" style="left:185.28px;top:480.4px;width:54.88px;text-align:center;line-height:11.8px">-750</div>
<div class="ch" style="left:240.16px;top:480.4px;width:54.88px;text-align:center;line-height:11.8px">-750</div>
<div class="ch" style="left:295.04px;top:480.4px;width:54.88px;text-align:center;line-height:11.8px">-750</div>
<div class="ch" style="left:349.92px;top:480.4px;width:54.88px;text-align:center;line-height:11.8px">-750</div>
<div class="ch" style="left:62.3px;top:492.2px;line-height:11.8px">Change In Cash Held</div>
<div class="ch" style="left:130.4px;top:492.2px;width:54.88px;text-align:center;line-height:11.8px">504,178</div>
<div class="ch" style="left:185.28px;top:492.2px;width:54.88px;text-align:center;line-height:11.8px">545,159</div>
<div class="ch" style="left:240.16px;top:492.2px;width:54.88px;text-align:center;line-height:11.8px">624,772</div>
<div class="ch" style="left:295.04px;top:492.2px;width:54.88px;text-align:center;line-height:11.8px">577,814</div>
<div class="ch" style="left:349.92px;top:492.2px;width:54.88px;text-align:center;line-height:11.8px">632,721</div>
<div class="ch" style="left:62.3px;top:504px;line-height:11.8px">Closing Cash</div>
<div class="ch" style="left:130.4px;top:504px;width:54.88px;text-align:center;line-height:11.8px">1,007,605</div>
<div class="ch" style="left:185.28px;top:504px;width:54.88px;text-align:center;line-height:11.8px">1,089,568</div>
<div class="ch" style="left:240.16px;top:504px;width:54.88px;text-align:center;line-height:11.8px">1,248,794</div>
<div class="ch" style="left:295.04px;top:504px;width:54.88px;text-align:center;line-height:11.8px">1,154,879</div>
<div class="ch" style="left:349.92px;top:504px;width:54.88px;text-align:center;line-height:11.8px">1,264,693</div>
<div class="a" style="left:428.7px;top:294.6px;width:554.9px;height:224px;border:1px solid #ebebeb;background:#fff"></div>
<svg class="a" style="left:0;top:0" width="1000" height="591" viewBox="0 0 1000 591"><line x1="531.7" y1="303" x2="975" y2="303" stroke="#e2e2e2" stroke-width="0.8"/><line x1="531.7" y1="323" x2="975" y2="323" stroke="#e2e2e2" stroke-width="0.8"/><line x1="531.7" y1="343" x2="975" y2="343" stroke="#e2e2e2" stroke-width="0.8"/><line x1="531.7" y1="363" x2="975" y2="363" stroke="#e2e2e2" stroke-width="0.8"/><line x1="531.7" y1="383" x2="975" y2="383" stroke="#e2e2e2" stroke-width="0.8"/><line x1="531.7" y1="403" x2="975" y2="403" stroke="#e2e2e2" stroke-width="0.8"/><line x1="531.7" y1="423" x2="975" y2="423" stroke="#e2e2e2" stroke-width="0.8"/><rect x="539.49" y="385.75" width="6.2" height="37.25" fill="#4472c4"/><rect x="545.69" y="423" width="6.2" height="5" fill="#ed7d31"/><rect x="576.26" y="377.48" width="6.2" height="45.52" fill="#4472c4"/><rect x="613.04" y="382.65" width="6.2" height="40.35" fill="#4472c4"/><rect x="649.81" y="375.27" width="6.2" height="47.73" fill="#4472c4"/><rect x="686.59" y="381.43" width="6.2" height="41.57" fill="#4472c4"/><rect x="723.36" y="378.91" width="6.2" height="44.09" fill="#4472c4"/><rect x="760.14" y="380.27" width="6.2" height="42.73" fill="#4472c4"/><rect x="796.91" y="378.26" width="6.2" height="44.74" fill="#4472c4"/><rect x="833.69" y="377.24" width="6.2" height="45.76" fill="#4472c4"/><rect x="870.46" y="372.85" width="6.2" height="50.15" fill="#4472c4"/><rect x="907.24" y="371.88" width="6.2" height="51.12" fill="#4472c4"/><rect x="944.01" y="372.58" width="6.2" height="50.42" fill="#4472c4"/><polyline points="550.09,428 586.86,377.48 623.64,382.65 660.41,375.27 697.19,381.43 733.96,378.91 770.74,380.27 807.51,378.26 844.29,377.24 881.06,372.85 917.84,371.88 954.61,372.58" fill="none" stroke="#ffd966" stroke-width="2" stroke-linejoin="round" stroke-linecap="round"/><polyline points="550.09,358.51 586.86,332.03 623.64,342.38 660.41,327.61 697.19,339.94 733.96,334.89 770.74,337.61 807.51,333.59 844.29,331.56 881.06,322.77 917.84,320.83 954.61,322.24" fill="none" stroke="#2e5c9e" stroke-width="2" stroke-linejoin="round" stroke-linecap="round"/><line x1="443.4" y1="454.78" x2="973" y2="454.78" stroke="#e6e6e6" stroke-width="0.8"/><line x1="443.4" y1="466.57" x2="973" y2="466.57" stroke="#e6e6e6" stroke-width="0.8"/><line x1="443.4" y1="478.35" x2="973" y2="478.35" stroke="#e6e6e6" stroke-width="0.8"/><line x1="443.4" y1="490.13" x2="973" y2="490.13" stroke="#e6e6e6" stroke-width="0.8"/><line x1="443.4" y1="501.92" x2="973" y2="501.92" stroke="#e6e6e6" stroke-width="0.8"/><line x1="531.7" y1="443" x2="973" y2="443" stroke="#e6e6e6" stroke-width="0.8"/><line x1="443.4" y1="513.7" x2="973" y2="513.7" stroke="#e6e6e6" stroke-width="0.8"/><line x1="443.4" y1="454.78" x2="443.4" y2="513.7" stroke="#e6e6e6" stroke-width="0.8"/><line x1="531.7" y1="443" x2="531.7" y2="513.7" stroke="#e6e6e6" stroke-width="0.8"/><line x1="568.48" y1="443" x2="568.48" y2="513.7" stroke="#e6e6e6" stroke-width="0.8"/><line x1="605.25" y1="443" x2="605.25" y2="513.7" stroke="#e6e6e6" stroke-width="0.8"/><line x1="642.03" y1="443" x2="642.03" y2="513.7" stroke="#e6e6e6" stroke-width="0.8"/><line x1="678.8" y1="443" x2="678.8" y2="513.7" stroke="#e6e6e6" stroke-width="0.8"/><line x1="715.58" y1="443" x2="715.58" y2="513.7" stroke="#e6e6e6" stroke-width="0.8"/><line x1="752.35" y1="443" x2="752.35" y2="513.7" stroke="#e6e6e6" stroke-width="0.8"/><line x1="789.12" y1="443" x2="789.12" y2="513.7" stroke="#e6e6e6" stroke-width="0.8"/><line x1="825.9" y1="443" x2="825.9" y2="513.7" stroke="#e6e6e6" stroke-width="0.8"/><line x1="862.67" y1="443" x2="862.67" y2="513.7" stroke="#e6e6e6" stroke-width="0.8"/><line x1="899.45" y1="443" x2="899.45" y2="513.7" stroke="#e6e6e6" stroke-width="0.8"/><line x1="936.23" y1="443" x2="936.23" y2="513.7" stroke="#e6e6e6" stroke-width="0.8"/><line x1="973" y1="443" x2="973" y2="513.7" stroke="#e6e6e6" stroke-width="0.8"/><rect x="446.4" y="458.68" width="16" height="4" fill="#4472c4"/><rect x="446.4" y="470.46" width="16" height="4" fill="#ed7d31"/><rect x="446.4" y="482.24" width="16" height="4" fill="#a5a5a5"/><rect x="446.4" y="495.03" width="16" height="2" fill="#ffd966"/><rect x="446.4" y="506.81" width="16" height="2" fill="#2e5c9e"/></svg>
<div class="ch" style="left:465.2px;top:297.4px;width:60px;text-align:right">1,200,000</div>
<div class="ch" style="left:465.2px;top:317.4px;width:60px;text-align:right">1,000,000</div>
<div class="ch" style="left:465.2px;top:337.4px;width:60px;text-align:right">800,000</div>
<div class="ch" style="left:465.2px;top:357.4px;width:60px;text-align:right">600,000</div>
<div class="ch" style="left:465.2px;top:377.4px;width:60px;text-align:right">400,000</div>
<div class="ch" style="left:465.2px;top:397.4px;width:60px;text-align:right">200,000</div>
<div class="ch" style="left:465.2px;top:417.4px;width:60px;text-align:right">0</div>
<div class="ch" style="left:465.2px;top:437.4px;width:60px;text-align:right">-200,000</div>
<div class="ch" style="left:531.7px;top:443px;width:36.77px;text-align:center;line-height:11.78px">Jan</div>
<div class="ch" style="left:568.48px;top:443px;width:36.77px;text-align:center;line-height:11.78px">Feb</div>
<div class="ch" style="left:605.25px;top:443px;width:36.77px;text-align:center;line-height:11.78px">Mar</div>
<div class="ch" style="left:642.03px;top:443px;width:36.77px;text-align:center;line-height:11.78px">Apr</div>
<div class="ch" style="left:678.8px;top:443px;width:36.77px;text-align:center;line-height:11.78px">May</div>
<div class="ch" style="left:715.58px;top:443px;width:36.77px;text-align:center;line-height:11.78px">Jun</div>
<div class="ch" style="left:752.35px;top:443px;width:36.77px;text-align:center;line-height:11.78px">Jul</div>
<div class="ch" style="left:789.12px;top:443px;width:36.77px;text-align:center;line-height:11.78px">Aug</div>
<div class="ch" style="left:825.9px;top:443px;width:36.77px;text-align:center;line-height:11.78px">Sep</div>
<div class="ch" style="left:862.67px;top:443px;width:36.77px;text-align:center;line-height:11.78px">Oct</div>
<div class="ch" style="left:899.45px;top:443px;width:36.77px;text-align:center;line-height:11.78px">Nov</div>
<div class="ch" style="left:936.23px;top:443px;width:36.77px;text-align:center;line-height:11.78px">Dec</div>
<div class="ch" style="left:463.4px;top:454.78px;line-height:11.78px">Operating Cash Flows</div>
<div class="ch" style="left:531.7px;top:454.78px;width:36.77px;text-align:center;line-height:11.78px">372,452</div>
<div class="ch" style="left:568.48px;top:454.78px;width:36.77px;text-align:center;line-height:11.78px">455,234</div>
<div class="ch" style="left:605.25px;top:454.78px;width:36.77px;text-align:center;line-height:11.78px">403,452</div>
<div class="ch" style="left:642.03px;top:454.78px;width:36.77px;text-align:center;line-height:11.78px">477,314</div>
<div class="ch" style="left:678.8px;top:454.78px;width:36.77px;text-align:center;line-height:11.78px">415,700</div>
<div class="ch" style="left:715.58px;top:454.78px;width:36.77px;text-align:center;line-height:11.78px">440,902</div>
<div class="ch" style="left:752.35px;top:454.78px;width:36.77px;text-align:center;line-height:11.78px">427,308</div>
<div class="ch" style="left:789.12px;top:454.78px;width:36.77px;text-align:center;line-height:11.78px">447,442</div>
<div class="ch" style="left:825.9px;top:454.78px;width:36.77px;text-align:center;line-height:11.78px">457,592</div>
<div class="ch" style="left:862.67px;top:454.78px;width:36.77px;text-align:center;line-height:11.78px">501,502</div>
<div class="ch" style="left:899.45px;top:454.78px;width:36.77px;text-align:center;line-height:11.78px">511,212</div>
<div class="ch" style="left:936.23px;top:454.78px;width:36.77px;text-align:center;line-height:11.78px">504,178</div>
<div class="ch" style="left:463.4px;top:466.57px;line-height:11.78px">Investing Cash Flows</div>
<div class="ch" style="left:531.7px;top:466.57px;width:36.77px;text-align:center;line-height:11.78px">-50,000</div>
<div class="ch" style="left:568.48px;top:466.57px;width:36.77px;text-align:center;line-height:11.78px">0</div>
<div class="ch" style="left:605.25px;top:466.57px;width:36.77px;text-align:center;line-height:11.78px">0</div>
<div class="ch" style="left:642.03px;top:466.57px;width:36.77px;text-align:center;line-height:11.78px">0</div>
<div class="ch" style="left:678.8px;top:466.57px;width:36.77px;text-align:center;line-height:11.78px">0</div>
<div class="ch" style="left:715.58px;top:466.57px;width:36.77px;text-align:center;line-height:11.78px">0</div>
<div class="ch" style="left:752.35px;top:466.57px;width:36.77px;text-align:center;line-height:11.78px">0</div>
<div class="ch" style="left:789.12px;top:466.57px;width:36.77px;text-align:center;line-height:11.78px">0</div>
<div class="ch" style="left:825.9px;top:466.57px;width:36.77px;text-align:center;line-height:11.78px">0</div>
<div class="ch" style="left:862.67px;top:466.57px;width:36.77px;text-align:center;line-height:11.78px">0</div>
<div class="ch" style="left:899.45px;top:466.57px;width:36.77px;text-align:center;line-height:11.78px">0</div>
<div class="ch" style="left:936.23px;top:466.57px;width:36.77px;text-align:center;line-height:11.78px">0</div>
<div class="ch" style="left:463.4px;top:478.35px;line-height:11.78px">Financing Cash Flows</div>
<div class="ch" style="left:531.7px;top:478.35px;width:36.77px;text-align:center;line-height:11.78px">0</div>
<div class="ch" style="left:568.48px;top:478.35px;width:36.77px;text-align:center;line-height:11.78px">-750</div>
<div class="ch" style="left:605.25px;top:478.35px;width:36.77px;text-align:center;line-height:11.78px">-750</div>
<div class="ch" style="left:642.03px;top:478.35px;width:36.77px;text-align:center;line-height:11.78px">-750</div>
<div class="ch" style="left:678.8px;top:478.35px;width:36.77px;text-align:center;line-height:11.78px">-750</div>
<div class="ch" style="left:715.58px;top:478.35px;width:36.77px;text-align:center;line-height:11.78px">-750</div>
<div class="ch" style="left:752.35px;top:478.35px;width:36.77px;text-align:center;line-height:11.78px">-750</div>
<div class="ch" style="left:789.12px;top:478.35px;width:36.77px;text-align:center;line-height:11.78px">-750</div>
<div class="ch" style="left:825.9px;top:478.35px;width:36.77px;text-align:center;line-height:11.78px">-750</div>
<div class="ch" style="left:862.67px;top:478.35px;width:36.77px;text-align:center;line-height:11.78px">-750</div>
<div class="ch" style="left:899.45px;top:478.35px;width:36.77px;text-align:center;line-height:11.78px">-750</div>
<div class="ch" style="left:936.23px;top:478.35px;width:36.77px;text-align:center;line-height:11.78px">-750</div>
<div class="ch" style="left:463.4px;top:490.13px;line-height:11.78px">Change In Cash Held</div>
<div class="ch" style="left:531.7px;top:490.13px;width:36.77px;text-align:center;line-height:11.78px">-50,000</div>
<div class="ch" style="left:568.48px;top:490.13px;width:36.77px;text-align:center;line-height:11.78px">455,234</div>
<div class="ch" style="left:605.25px;top:490.13px;width:36.77px;text-align:center;line-height:11.78px">403,452</div>
<div class="ch" style="left:642.03px;top:490.13px;width:36.77px;text-align:center;line-height:11.78px">477,314</div>
<div class="ch" style="left:678.8px;top:490.13px;width:36.77px;text-align:center;line-height:11.78px">415,700</div>
<div class="ch" style="left:715.58px;top:490.13px;width:36.77px;text-align:center;line-height:11.78px">440,902</div>
<div class="ch" style="left:752.35px;top:490.13px;width:36.77px;text-align:center;line-height:11.78px">427,308</div>
<div class="ch" style="left:789.12px;top:490.13px;width:36.77px;text-align:center;line-height:11.78px">447,442</div>
<div class="ch" style="left:825.9px;top:490.13px;width:36.77px;text-align:center;line-height:11.78px">457,592</div>
<div class="ch" style="left:862.67px;top:490.13px;width:36.77px;text-align:center;line-height:11.78px">501,502</div>
<div class="ch" style="left:899.45px;top:490.13px;width:36.77px;text-align:center;line-height:11.78px">511,212</div>
<div class="ch" style="left:936.23px;top:490.13px;width:36.77px;text-align:center;line-height:11.78px">504,178</div>
<div class="ch" style="left:463.4px;top:501.92px;line-height:11.78px">Closing Cash</div>
<div class="ch" style="left:531.7px;top:501.92px;width:36.77px;text-align:center;line-height:11.78px">644,903</div>
<div class="ch" style="left:568.48px;top:501.92px;width:36.77px;text-align:center;line-height:11.78px">909,719</div>
<div class="ch" style="left:605.25px;top:501.92px;width:36.77px;text-align:center;line-height:11.78px">806,153</div>
<div class="ch" style="left:642.03px;top:501.92px;width:36.77px;text-align:center;line-height:11.78px">953,877</div>
<div class="ch" style="left:678.8px;top:501.92px;width:36.77px;text-align:center;line-height:11.78px">830,649</div>
<div class="ch" style="left:715.58px;top:501.92px;width:36.77px;text-align:center;line-height:11.78px">881,053</div>
<div class="ch" style="left:752.35px;top:501.92px;width:36.77px;text-align:center;line-height:11.78px">853,865</div>
<div class="ch" style="left:789.12px;top:501.92px;width:36.77px;text-align:center;line-height:11.78px">894,133</div>
<div class="ch" style="left:825.9px;top:501.92px;width:36.77px;text-align:center;line-height:11.78px">914,433</div>
<div class="ch" style="left:862.67px;top:501.92px;width:36.77px;text-align:center;line-height:11.78px">1,002,253</div>
<div class="ch" style="left:899.45px;top:501.92px;width:36.77px;text-align:center;line-height:11.78px">1,021,673</div>
<div class="ch" style="left:936.23px;top:501.92px;width:36.77px;text-align:center;line-height:11.78px">1,007,605</div>
<div class="a" style="left:0;top:559px;width:1000px;height:21px;background:#ebebeb"></div>
<svg class="a" style="left:16px;top:565px" width="6" height="9" viewBox="0 0 6 9"><path d="M5 0.5 L1 4.5 L5 8.5" fill="none" stroke="#b0b0b0" stroke-width="1"/></svg>
<svg class="a" style="left:36px;top:565px" width="6" height="9" viewBox="0 0 6 9"><path d="M1 0.5 L5 4.5 L1 8.5" fill="none" stroke="#555" stroke-width="1"/></svg>
<div class="t" style="left:78.75px;top:563.3px;font-size:9.05px;color:#2a2a2a;transform:scaleX(1.0412);transform-origin:0 0;">How To</div>
<div class="a" style="left:121.4px;top:560.5px;width:70.6px;height:15.5px;background:#f9f58a"></div>
<div class="t" style="left:127.8px;top:563.3px;font-size:9.05px;color:#2a2a2a;transform:scaleX(0.9971);transform-origin:0 0;">2025 Accounts</div>
<div class="t" style="left:204.5px;top:563.3px;font-size:9.05px;color:#2a2a2a;transform:scaleX(0.9773);transform-origin:0 0;">2025 MRR Dashboard</div>
<div class="t" style="left:310.4px;top:563.3px;font-size:9.05px;color:#2a2a2a;transform:scaleX(0.9488);transform-origin:0 0;">IS 2025</div>
<div class="t" style="left:356px;top:563.3px;font-size:9.05px;color:#2a2a2a;transform:scaleX(0.9219);transform-origin:0 0;">CF 2025</div>
<div class="t" style="left:406.4px;top:563.3px;font-size:9.05px;color:#2a2a2a;transform:scaleX(0.9101);transform-origin:0 0;">BS 2025</div>
<div class="a" style="left:576.5px;top:560.5px;width:60.5px;height:15.5px;background:#f9f58a"></div>
<div class="t" style="left:583px;top:563.3px;font-size:9.05px;color:#2a2a2a;transform:scaleX(0.9001);transform-origin:0 0;">CAPEX 2025</div>
<div class="a" style="left:643px;top:560.5px;width:71.7px;height:15.5px;background:#f9f58a"></div>
<div class="t" style="left:649px;top:563.3px;font-size:9.05px;color:#2a2a2a;transform:scaleX(0.9903);transform-origin:0 0;">2026 Accounts</div>
<div class="t" style="left:726px;top:563.3px;font-size:9.05px;color:#2a2a2a;transform:scaleX(0.9751);transform-origin:0 0;">2026 MRR Dashboard</div>
<div class="t" style="left:832px;top:563.3px;font-size:9.05px;color:#2a2a2a;transform:scaleX(0.9456);transform-origin:0 0;">IS 2026</div>
<div class="a" style="left:449px;top:558px;width:122.5px;height:18.5px;background:#fff"></div>
<div class="t" style="left:455.5px;top:561px;font-size:8.8px;font-weight:bold;color:#2a2a2a;transform:scaleX(0.9838);transform-origin:0 0;">Statements Summary 2025</div>
<div class="a" style="left:455px;top:574px;width:111px;height:1px;background:#1e7145"></div>
<div class="t" style="left:877.5px;top:563.5px;font-size:8px;color:#777">(</div>
<div class="a" style="left:886.5px;top:567.5px;width:1.6px;height:1.6px;background:#333;box-shadow:2.5px 0 #333,5px 0 #333"></div>
<div class="a" style="left:907px;top:568px;width:8.5px;height:1.2px;background:#333"></div>
<div class="a" style="left:910.6px;top:564.4px;width:1.2px;height:8.5px;background:#333"></div>
<div class="a" style="left:931.3px;top:565.5px;width:1.5px;height:1.5px;background:#444;box-shadow:0 2.6px #444,0 5.2px #444"></div>
<svg class="a" style="left:946px;top:566px" width="5" height="6" viewBox="0 0 5 6"><path d="M4.5 0 V6 L0.5 3 Z" fill="#444"/></svg>
<div class="a" style="left:953px;top:566.2px;width:20.5px;height:5px;background:#666;border-radius:2.5px"></div>
<svg class="a" style="left:981px;top:566px" width="5" height="6" viewBox="0 0 5 6"><path d="M0.5 0 V6 L4.5 3 Z" fill="#444"/></svg>
<div class="a" style="left:0;top:577.5px;width:1000px;height:2px;background:#f2f2f2"></div>
<div class="a" style="left:0;top:579px;width:1000px;height:12px;background:#f3f3f3"></div>
<div class="t" style="left:7px;top:581.3px;font-size:6.8px;color:#555;transform:scaleX(0.9666);transform-origin:0 0;line-height:11px">Ready</div>
<svg class="a" style="left:39.5px;top:582px" width="9" height="9" viewBox="0 0 9 9"><rect x="0.5" y="0.5" width="8" height="8" fill="none" stroke="#666"/><rect x="2.5" y="2.5" width="4" height="4" fill="#888"/></svg>
<svg class="a" style="left:60px;top:582px" width="10" height="9" viewBox="0 0 10 9"><circle cx="5" cy="1.6" r="1.2" fill="#444"/><path d="M0.8 3.2 H9.2 M5 3.2 V5.8 L2.5 8.7 M5 5.8 L7.5 8.7" fill="none" stroke="#444"/></svg>
<div class="t" style="left:71px;top:581.3px;font-size:6.8px;font-weight:bold;color:#333;transform:scaleX(0.9722);transform-origin:0 0;line-height:11px">Accessibility: Investigate</div>
<svg class="a" style="left:815px;top:582px" width="9" height="9" viewBox="0 0 9 9"><rect x="0.5" y="0.5" width="8" height="8" fill="none" stroke="#555"/><path d="M0.5 3.2 H8.5 M0.5 5.8 H8.5 M3.2 0.5 V8.5 M5.8 0.5 V8.5" stroke="#555"/></svg>
<svg class="a" style="left:841px;top:582px" width="9" height="9" viewBox="0 0 9 9"><rect x="0.5" y="0.5" width="8" height="8" fill="none" stroke="#555"/><rect x="2.5" y="1.5" width="4" height="6" fill="#888"/></svg>
<svg class="a" style="left:867px;top:582px" width="10" height="9" viewBox="0 0 10 9"><path d="M0.5 8.5 V0.5 H9.5 V8.5 H0.5 M3.5 0.5 V4.5 H6.5 V0.5" fill="none" stroke="#555"/></svg>
<div class="a" style="left:888px;top:586.5px;width:6px;height:1px;background:#666"></div>
<div class="a" style="left:895px;top:586.5px;width:67px;height:1px;background:#aaa"></div>
<div class="a" style="left:926.5px;top:583px;width:3.5px;height:7.5px;background:#555"></div>
<div class="a" style="left:964px;top:586.5px;width:6px;height:1px;background:#666"></div>
<div class="a" style="left:966.5px;top:584px;width:1px;height:6px;background:#666"></div>
<div class="t" style="left:978.5px;top:582px;font-size:6.5px;color:#333;transform:scaleX(0.9608);transform-origin:0 0;line-height:11px">96%</div>
</body></html>
